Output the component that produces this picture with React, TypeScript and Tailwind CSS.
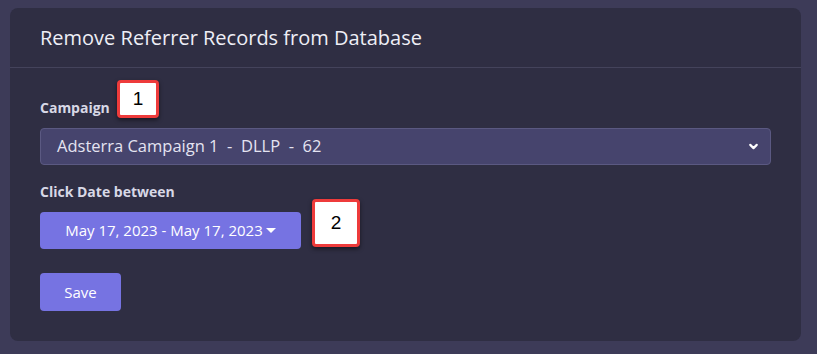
import { ChevronDown } from "lucide-react";

function Marker({ n, className }: { n: string; className: string }) {
  return (
    <div
      className={`absolute flex items-center justify-center bg-white border-[3px] border-[#ee3b3b] rounded-[4px] shadow-[0_2px_4px_rgba(0,0,0,0.5)] text-black text-[19px] font-['Liberation_Sans',sans-serif] ${className}`}
    >
      {n}
    </div>
  );
}

export default function App() {
  return (
    <div className="w-[817px] h-[354px] bg-[#3d3b58] pt-[8px] pl-[10px] font-['Open_Sans',sans-serif]">
      <div className="w-[791px] h-[333px] bg-[#2f2e43] rounded-[8px] flex flex-col">
        <div className="h-[60px] flex items-center px-[30px] border-b border-[#44435b] shrink-0">
          <h1 className="text-[20px] text-[#eeeef6]">Remove Referrer Records from Database</h1>
        </div>
        <div className="px-[30px] pt-[31px] relative flex-1">
          <label className="block text-[14px] font-bold text-[#d8d8e6] leading-[18px]">Campaign</label>
          <Marker n="1" className="left-[107px] top-[12px] w-[42px] h-[38px]" />
          <div className="mt-[11px] h-[37px] w-[731px] bg-[#46446d] border border-[#5b5982] rounded-[4px] flex items-center justify-between pl-[16px] pr-[10px]">
            <span className="text-[16.5px] text-[#e4e3f1] whitespace-pre">Adsterra Campaign 1  -  DLLP  -  62</span>
            <ChevronDown className="w-[13px] h-[13px] text-white" strokeWidth={4} />
          </div>
          <label className="block mt-[18px] text-[14px] font-bold text-[#d8d8e6] leading-[18px]">Click Date between</label>
          <div className="mt-[11px] flex items-start">
            <button className="h-[37px] w-[261px] bg-[#7673e2] rounded-[4px] flex items-center justify-center text-[15px] text-white">
              May 17, 2023 - May 17, 2023
              <span className="ml-[3px] w-0 h-0 border-l-[5px] border-r-[5px] border-t-[5px] border-l-transparent border-r-transparent border-t-white" />
            </button>
          </div>
          <Marker n="2" className="left-[302px] top-[131px] w-[48px] h-[48px]" />
          <button className="mt-[24px] h-[38px] w-[81px] bg-[#7673e2] rounded-[4px] text-[15px] text-white">Save</button>
        </div>
      </div>
    </div>
  );
}
